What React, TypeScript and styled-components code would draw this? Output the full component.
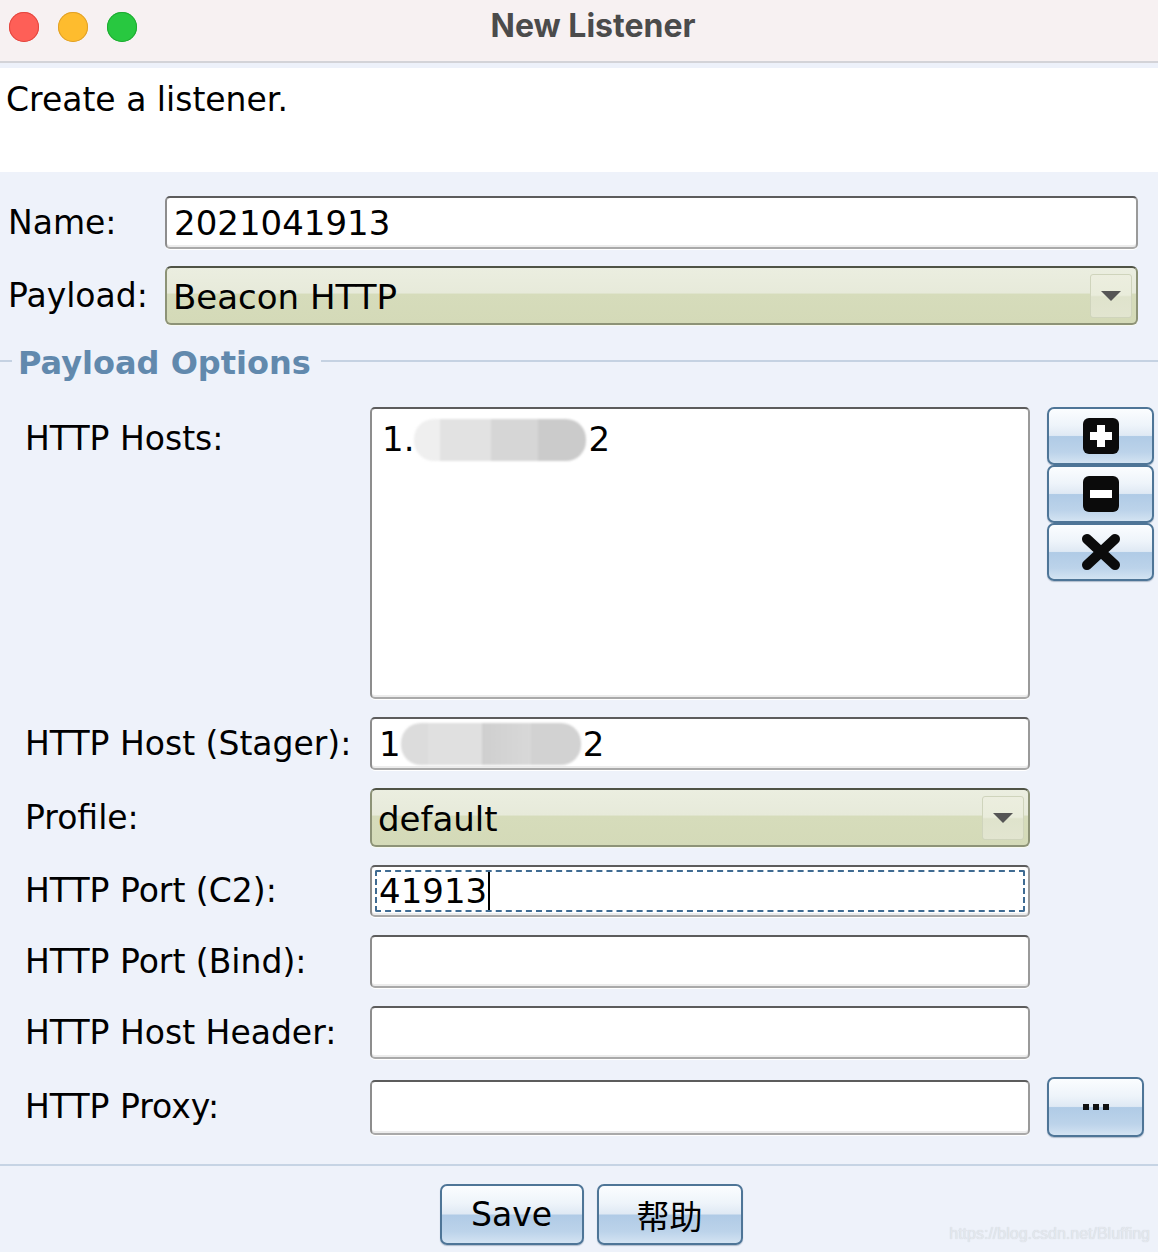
import React from "react";
import styled, { createGlobalStyle } from "styled-components";

const GlobalStyle = createGlobalStyle`
  html, body { margin: 0; padding: 0; }
  body {
    background: #eef2fa;
    font-family: "DejaVu Sans", "Noto Sans CJK SC", sans-serif;
    color: #000;
  }
`;

const Window = styled.div`
  width: 1158px;
  height: 1252px;
  display: flex;
  flex-direction: column;
  background: #eef2fa;
  position: relative;
  overflow: hidden;
`;

const TitleBar = styled.div`
  height: 61px;
  flex: none;
  background: #f7f1f2;
  border-bottom: 2px solid #d3d3d8;
  display: flex;
  align-items: center;
  position: relative;
`;

const Lights = styled.div`
  display: flex;
  gap: 19px;
  padding-left: 9px;
  margin-top: -8px;
`;

const Light = styled.span<{ $c: string; $b: string }>`
  width: 30px;
  height: 30px;
  border-radius: 50%;
  background: ${(p) => p.$c};
  box-shadow: inset 0 0 0 1px ${(p) => p.$b};
`;

const Title = styled.div`
  position: absolute;
  left: 0;
  right: 0;
  top: 6px;
  text-align: center;
  padding-left: 28px;
  font-family: "Inter", "Noto Sans", sans-serif;
  font-weight: 700;
  font-size: 32px;
  color: #4b4b4b;
`;

const Strip = styled.div`
  height: 5px;
  flex: none;
  background: #edf1fa;
`;

const Header = styled.div`
  height: 104px;
  flex: none;
  background: #fff;
  box-sizing: border-box;
  padding: 12px 0 0 6px;
  font-size: 33px;
  line-height: 40px;
`;

const Body = styled.div`
  flex: 1;
  display: flex;
  flex-direction: column;
`;

const TopForm = styled.div`
  display: grid;
  grid-template-columns: 157px 1fr;
  row-gap: 17px;
  padding: 24px 20px 0 8px;
  align-items: center;
`;

const Label = styled.div`
  font-size: 33px;
  line-height: 40px;
  white-space: nowrap;
`;

const TextField = styled.div<{ $h?: number }>`
  height: ${(p) => p.$h ?? 53}px;
  box-sizing: border-box;
  background: #fff;
  border: 2px solid #a9a9a9;
  border-top-color: #5c5c5c;
  border-left-color: #8d8d8d;
  border-right-color: #9a9a9a;
  border-radius: 5px;
  box-shadow: 0 1px 0 #fff, inset 0 -2px 0 #ececec;
  display: flex;
  align-items: center;
  padding: 0 7px;
  font-size: 34px;
  line-height: 40px;
  white-space: nowrap;
  position: relative;
`;

const ListBox = styled(TextField)`
  align-items: flex-start;
  padding-top: 10px;
  padding-left: 10px;
`;

const FocusRing = styled.div`
  position: absolute;
  inset: 3px;
  border: 2px dashed #3f6b92;
  border-radius: 2px;
  pointer-events: none;
`;

const Caret = styled.span`
  display: inline-block;
  width: 2px;
  height: 42px;
  background: #000;
  margin-left: 1px;
`;

const Combo = styled.div`
  height: 59px;
  box-sizing: border-box;
  border: 2px solid #8d9377;
  border-top-color: #4f5345;
  border-radius: 6px;
  background: linear-gradient(#ebeee0 0%, #e7eada 45%, #d6dcbb 48%, #d4dab8 100%);
  display: flex;
  align-items: center;
  padding: 0 4px 0 6px;
  font-size: 34px;
  line-height: 40px;
  box-shadow: 0 1px 0 #f7f9f0;
`;

const ComboText = styled.div`
  flex: 1;
  padding-top: 2px;
`;

const ComboArrow = styled.div`
  width: 42px;
  height: 44px;
  box-sizing: border-box;
  border: 1px solid #cfd4bc;
  border-radius: 3px;
  background: linear-gradient(#eceedf 0%, #e9ecdb 48%, #dfe3cc 52%, #e2e5d0 100%);
  display: flex;
  align-items: center;
  justify-content: center;
`;

const Legend = styled.div`
  display: flex;
  align-items: center;
  margin-top: 18px;
`;

const LegendLine = styled.div<{ $w?: number }>`
  height: 2px;
  margin-top: -4px;
  background: #c5d2e2;
  ${(p) => (p.$w ? `width: ${p.$w}px;` : "flex: 1;")}
`;

const LegendText = styled.div`
  font-size: 32px;
  font-weight: 700;
  color: #6189ad;
  padding: 0 10px 0 6px;
  line-height: 40px;
`;

const OptionsGrid = styled.div`
  display: grid;
  grid-template-columns: 328px 660px 107px;
  column-gap: 17px;
  row-gap: 18px;
  padding: 24px 0 0 25px;
  align-items: center;
`;

const TopLabel = styled(Label)`
  align-self: start;
  padding-top: 12px;
`;

const ButtonStack = styled.div`
  align-self: start;
  display: flex;
  flex-direction: column;
`;

const AquaButton = styled.button<{ $w?: number; $h?: number }>`
  width: ${(p) => (p.$w ? `${p.$w}px` : "100%")};
  height: ${(p) => p.$h ?? 58}px;
  box-sizing: border-box;
  border: 2px solid #4e7597;
  border-radius: 7px;
  background: linear-gradient(
    #fbfdff 0%,
    #eef4fa 30%,
    #dfe9f4 49%,
    #b0cbe6 51%,
    #bcd3ea 80%,
    #d3e3f2 100%
  );
  display: flex;
  align-items: center;
  justify-content: center;
  padding: 0;
  font-family: "DejaVu Sans", "Noto Sans CJK SC", sans-serif;
  font-size: 33px;
  color: #000;
  box-shadow: 0 1px 1px rgba(60, 90, 120, 0.35);
`;

const Footer = styled.div`
  margin-top: 27px;
  border-top: 2px solid #c6d4e4;
  display: flex;
  justify-content: center;
  gap: 13px;
  padding: 18px 0 0 24px;
`;

const Redacted = styled.span<{ $w: number; $bg: string }>`
  display: inline-block;
  width: ${(p) => p.$w}px;
  height: 42px;
  background: ${(p) => p.$bg};
  border-radius: 20px;
  vertical-align: middle;
  margin: 0 2px 0 0;
  filter: blur(1px);
`;

const Watermark = styled.div`
  position: absolute;
  right: 8px;
  bottom: 9px;
  font-family: "Liberation Sans", Arial, sans-serif;
  font-size: 16px;
  color: #e4e8ee;
  text-shadow: 0 0 1px #c9ced6;
`;

const Arrow = () => (
  <svg width="22" height="12" viewBox="0 0 22 12">
    <path d="M1 1 H21 L11 11 Z" fill="#555" />
  </svg>
);

const PlusIcon = () => (
  <svg width="38" height="38" viewBox="0 0 38 38">
    <rect x="1" y="1" width="36" height="36" rx="6" fill="#0b0b0b" />
    <path d="M15 8 H23 V15 H30 V23 H23 V30 H15 V23 H8 V15 H15 Z" fill="#fff" />
  </svg>
);

const MinusIcon = () => (
  <svg width="38" height="38" viewBox="0 0 38 38">
    <rect x="1" y="1" width="36" height="36" rx="6" fill="#0b0b0b" />
    <rect x="8" y="15" width="22" height="8" fill="#fff" />
  </svg>
);

const CrossIcon = () => (
  <svg width="40" height="38" viewBox="0 0 40 38">
    <path
      d="M6 6 L34 32 M34 6 L6 32"
      stroke="#0b0b0b"
      strokeWidth="10"
      strokeLinecap="round"
    />
  </svg>
);

const Dots = () => (
  <svg width="28" height="8" viewBox="0 0 28 8">
    <rect x="1" y="1" width="6" height="6" fill="#111" />
    <rect x="11" y="1" width="6" height="6" fill="#111" />
    <rect x="21" y="1" width="6" height="6" fill="#111" />
  </svg>
);

const blob1 =
  "linear-gradient(90deg, #efefef 0%, #efefef 15%, #e2e2e2 15%, #e2e2e2 45%, #d6d6d6 45%, #d6d6d6 72%, #cbcbcb 72%, #cbcbcb 100%)";
const blob2 =
  "linear-gradient(90deg, #dcdcdc 0%, #dcdcdc 15%, #e0e0e0 15%, #e0e0e0 45%, #cfcfcf 45%, #d8d8d8 72%, #d2d2d2 72%, #d2d2d2 100%)";

export default function App() {
  return (
    <>
      <GlobalStyle />
      <Window>
        <TitleBar>
          <Lights>
            <Light $c="#fe5f57" $b="#e2463f" />
            <Light $c="#febc2e" $b="#e0a028" />
            <Light $c="#28c840" $b="#1eaa31" />
          </Lights>
          <Title>New Listener</Title>
        </TitleBar>
        <Strip />
        <Header>Create a listener.</Header>
        <Body>
          <TopForm>
            <Label>Name:</Label>
            <TextField>2021041913</TextField>
            <Label>Payload:</Label>
            <Combo>
              <ComboText>Beacon HTTP</ComboText>
              <ComboArrow>
                <Arrow />
              </ComboArrow>
            </Combo>
          </TopForm>

          <Legend>
            <LegendLine $w={12} />
            <LegendText>Payload Options</LegendText>
            <LegendLine />
          </Legend>

          <OptionsGrid>
            <TopLabel>HTTP Hosts:</TopLabel>
            <ListBox $h={292}>
              1.
              <Redacted $w={172} $bg={blob1} />
              2
            </ListBox>
            <ButtonStack>
              <AquaButton>
                <PlusIcon />
              </AquaButton>
              <AquaButton>
                <MinusIcon />
              </AquaButton>
              <AquaButton>
                <CrossIcon />
              </AquaButton>
            </ButtonStack>

            <Label>HTTP Host (Stager):</Label>
            <TextField>
              1
              <Redacted $w={180} $bg={blob2} />
              2
            </TextField>
            <div />

            <Label>Profile:</Label>
            <Combo>
              <ComboText>default</ComboText>
              <ComboArrow>
                <Arrow />
              </ComboArrow>
            </Combo>
            <div />

            <Label>HTTP Port (C2):</Label>
            <TextField $h={52}>
              41913
              <Caret />
              <FocusRing />
            </TextField>
            <div />

            <Label>HTTP Port (Bind):</Label>
            <TextField />
            <div />

            <Label>HTTP Host Header:</Label>
            <TextField />
            <div />

            <Label>HTTP Proxy:</Label>
            <TextField $h={55} />
            <AquaButton $w={97} $h={60}>
              <Dots />
            </AquaButton>
          </OptionsGrid>

          <Footer>
            <AquaButton $w={144} $h={61}>Save</AquaButton>
            <AquaButton $w={146} $h={61}>帮助</AquaButton>
          </Footer>
        </Body>
        <Watermark>https://blog.csdn.net/Bluffing</Watermark>
      </Window>
    </>
  );
}
